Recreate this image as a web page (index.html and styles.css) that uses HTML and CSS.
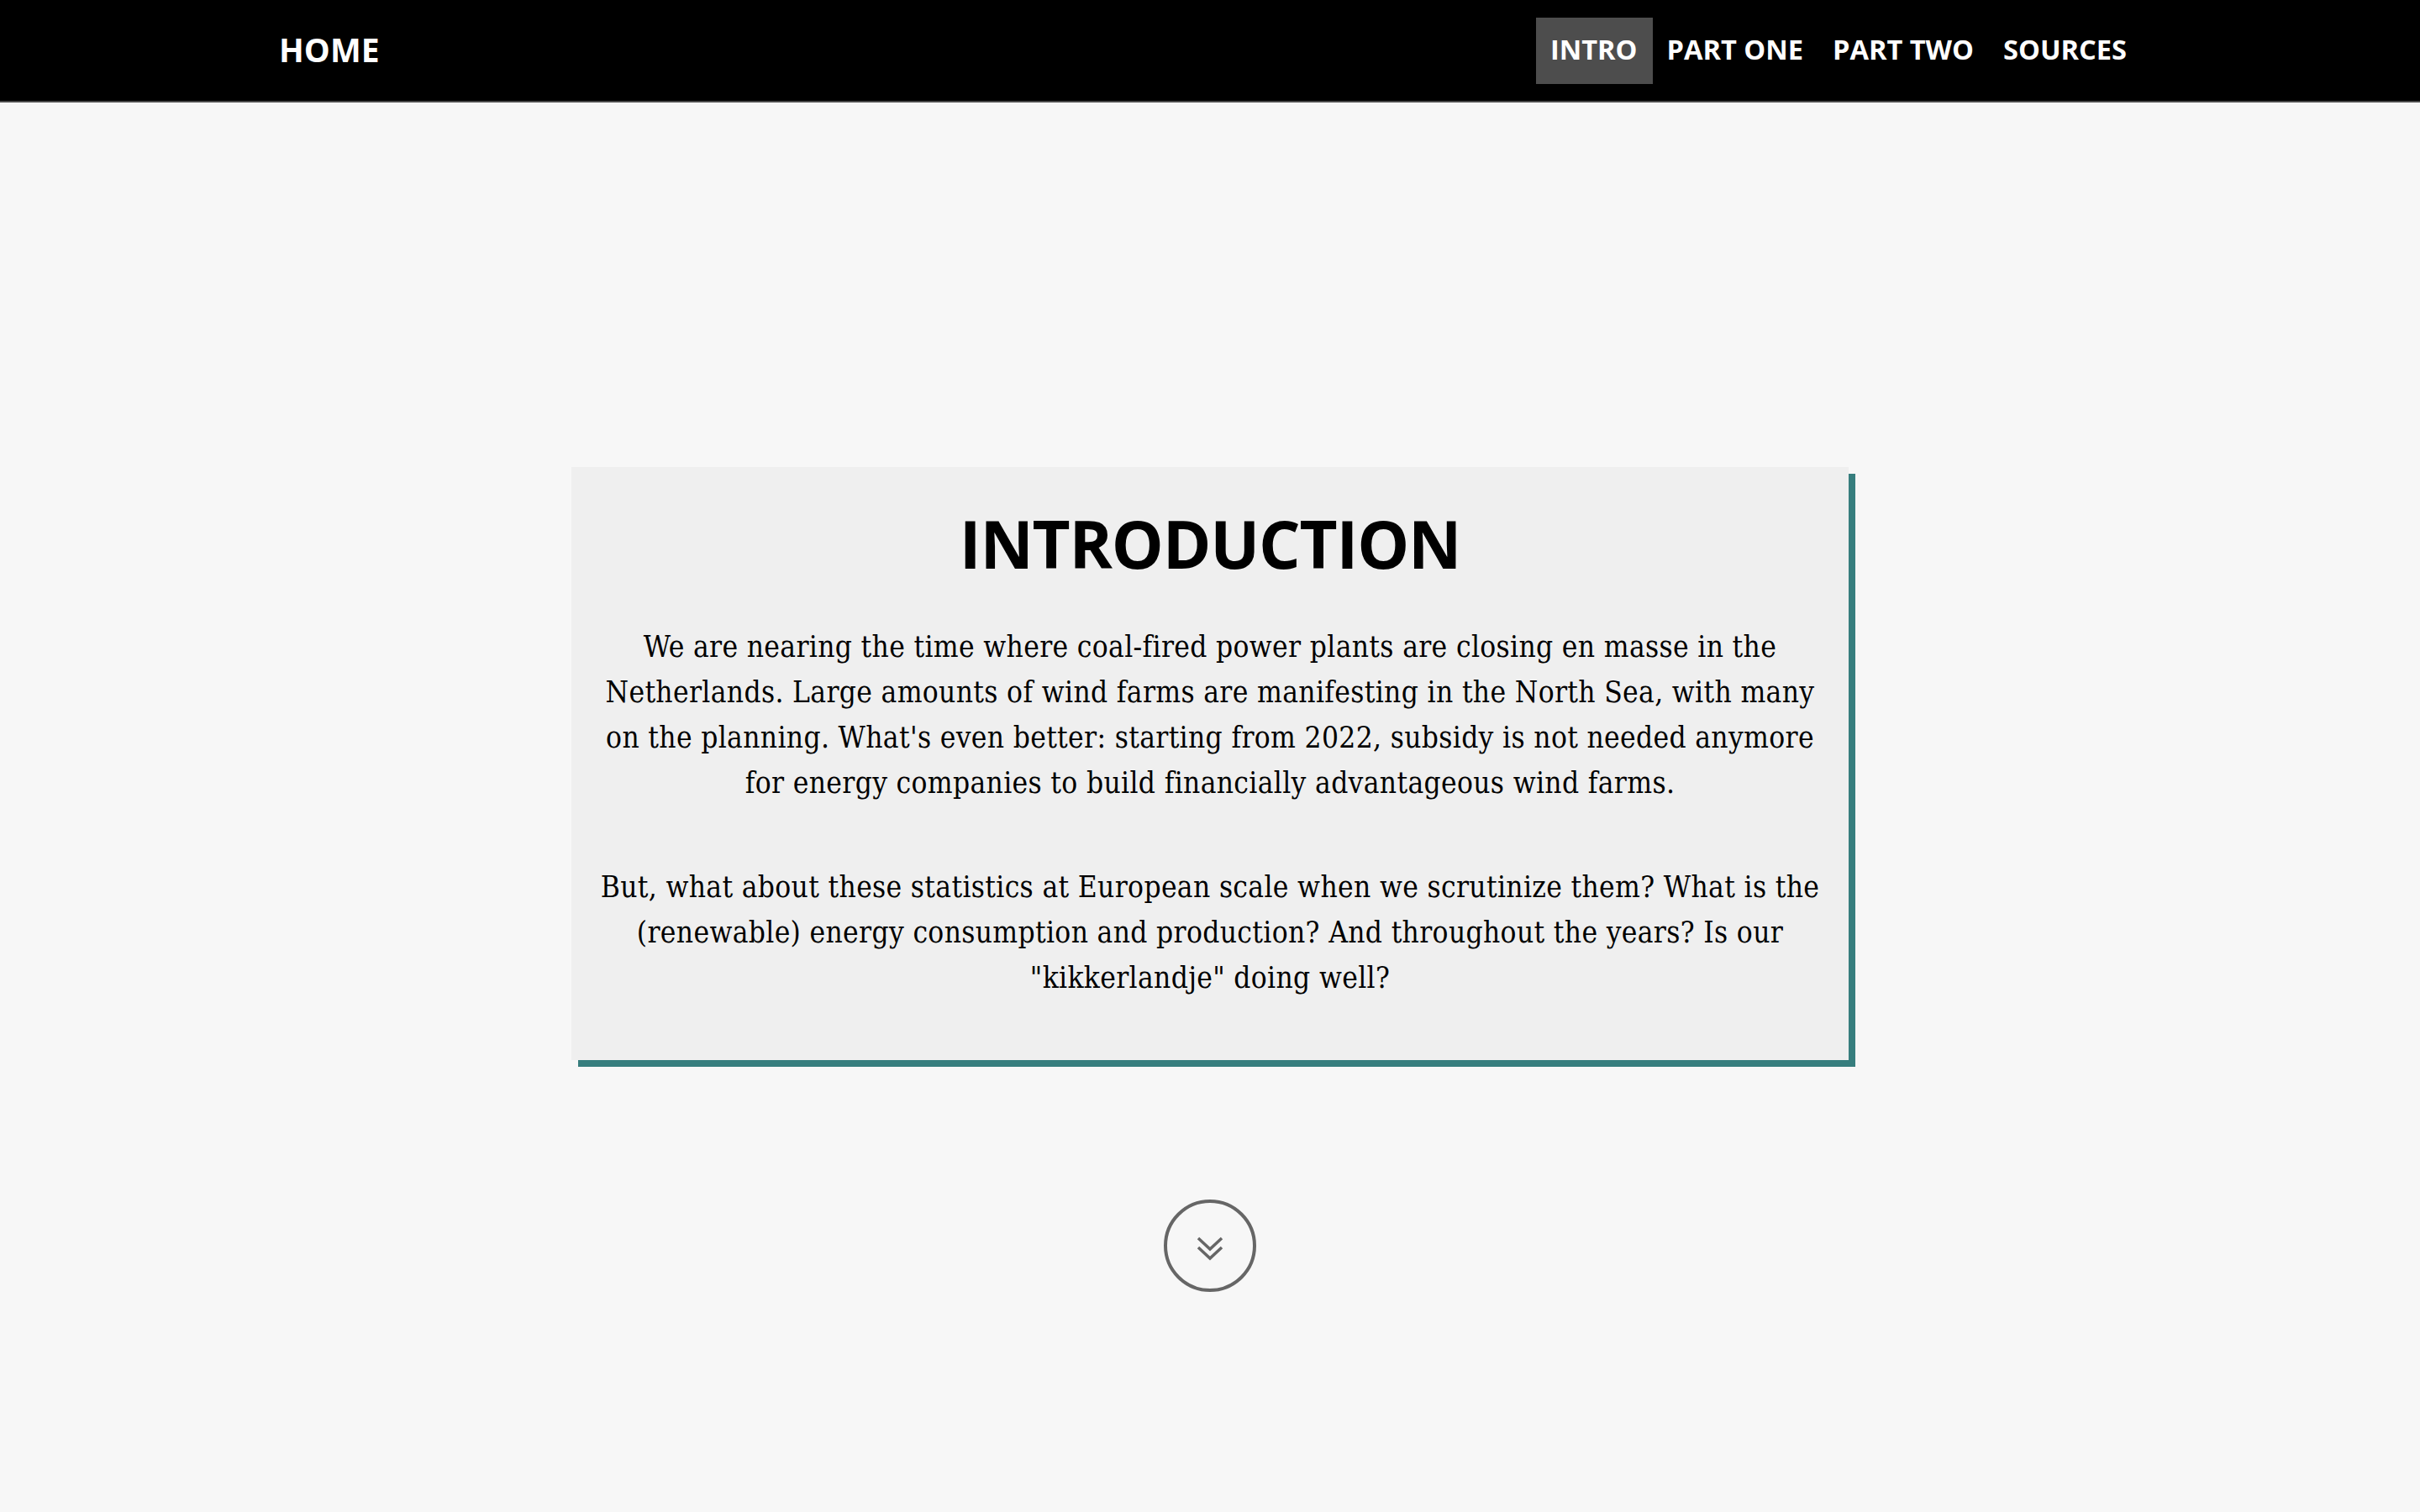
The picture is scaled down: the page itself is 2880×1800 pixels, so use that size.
FILE: index.html
```html
<!DOCTYPE html>
<html lang="en">
<head>
<meta charset="utf-8">
<title>Introduction</title>
<link rel="stylesheet" href="styles.css">
</head>
<body>
<header class="navbar">
  <a class="brand" href="#">HOME</a>
  <nav class="menu">
    <a class="menu-item active" href="#">INTRO</a>
    <a class="menu-item" href="#">PART ONE</a>
    <a class="menu-item" href="#">PART TWO</a>
    <a class="menu-item" href="#">SOURCES</a>
  </nav>
</header>
<main class="main">
  <section class="card">
    <h1 class="title">INTRODUCTION</h1>
    <p class="text">We are nearing the time where coal-fired power plants are closing en masse in the Netherlands. Large amounts of wind farms are manifesting in the North Sea, with many on the planning. What's even better: starting from 2022, subsidy is not needed anymore for energy companies to build financially advantageous wind farms.</p>
    <p class="text">But, what about these statistics at European scale when we scrutinize them? What is the (renewable) energy consumption and production? And throughout the years? Is our "kikkerlandje" doing well?</p>
  </section>
  <a class="scroll-down" href="#" aria-label="Scroll down">
    <svg viewBox="0 0 110 110" width="110" height="110">
      <circle cx="55" cy="55" r="53" fill="none" stroke="#666" stroke-width="4"/>
      <path d="M41 46 L55 59 L69 46 M41 57 L55 70 L69 57" fill="none" stroke="#666" stroke-width="3.5"/>
    </svg>
  </a>
</main>
</body>
</html>
```
FILE: styles.css
```css
* { box-sizing: border-box; }
html, body { margin: 0; padding: 0; }
body {
  background: #f7f7f7;
  color: #000;
  font-family: "DejaVu Serif Condensed", "DejaVu Serif", serif;
}
a { text-decoration: none; color: inherit; }

.navbar {
  height: 122px;
  background: #000;
  border-bottom: 2px solid #4a4a4a;
  display: flex;
  align-items: center;
  justify-content: space-between;
  padding: 0 331px 0 332px;
}
.brand {
  font-family: "Open Sans", sans-serif;
  font-weight: 700;
  font-size: 39px;
  color: #fff;
  line-height: 1;
  padding-bottom: 3px;
}
.menu {
  display: flex;
  align-items: center;
}
.menu-item {
  font-family: "Open Sans", sans-serif;
  font-weight: 700;
  font-size: 32.6px;
  color: #fff;
  height: 79px;
  padding: 0 18px 3px 17px;
  display: flex;
  align-items: center;
}
.menu-item.active { background: #4d4d4d; }

.main {
  display: flex;
  flex-direction: column;
  align-items: center;
  padding-top: 434px;
}
.card {
  width: 1520px;
  background: #efefef;
  box-shadow: 8px 8px 0 0 #377e7e;
  padding: 38px 30px 71px;
  text-align: center;
}
.title {
  margin: 0 0 43px;
  font-family: "Open Sans", sans-serif;
  font-weight: 700;
  font-size: 78px;
  letter-spacing: -1.2px;
  line-height: 106px;
}
.text {
  margin: 0;
  font-size: 35px;
  letter-spacing: 0.33px;
  line-height: 54px;
}
.text + .text { margin-top: 70px; }

.scroll-down {
  display: block;
  width: 110px;
  height: 110px;
  margin-top: 166px;
}
.scroll-down svg { display: block; }
```
